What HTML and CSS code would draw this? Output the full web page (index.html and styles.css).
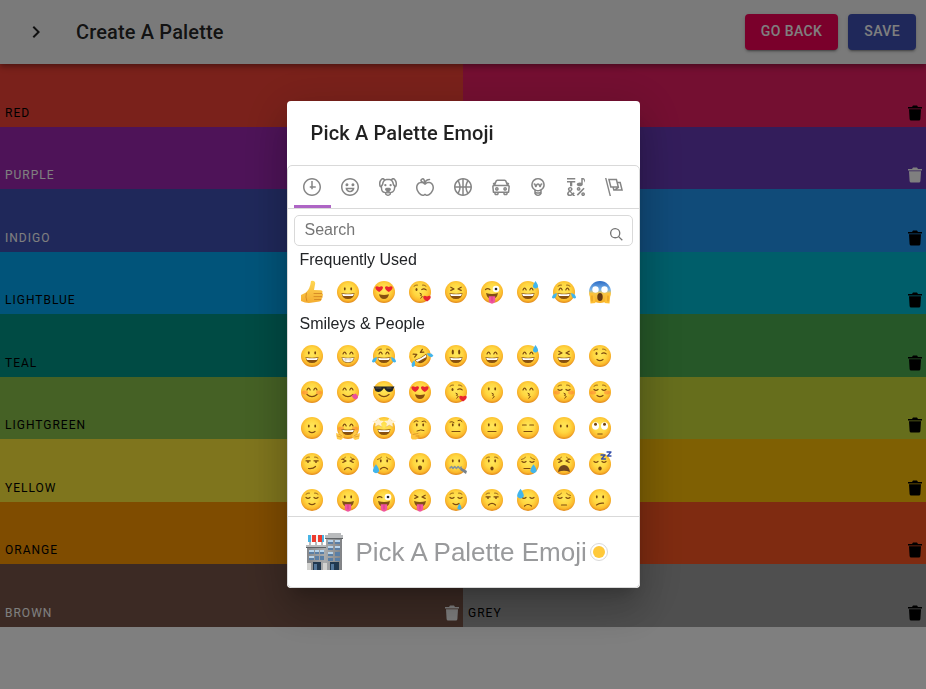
FILE: index.html
```html
<!DOCTYPE html>
<html lang="en">
<head>
<meta charset="utf-8">
<meta name="viewport" content="width=device-width, initial-scale=1">
<title>Create A Palette</title>
<link rel="stylesheet" href="styles.css">
</head>
<body>
<svg class="defs" aria-hidden="true">
  <defs>
    <radialGradient id="skin" cx="50%" cy="42%" r="60%">
      <stop offset="0" stop-color="#ffe75a"/><stop offset=".5" stop-color="#ffd640"/><stop offset=".78" stop-color="#fbb92c"/><stop offset="1" stop-color="#dc7f18"/>
    </radialGradient>
    <linearGradient id="scared" x1="0" y1="0" x2="0" y2="1">
      <stop offset="0" stop-color="#2c6bc4"/><stop offset=".4" stop-color="#78b3ea"/><stop offset=".55" stop-color="#f5c64a"/><stop offset="1" stop-color="#f6ae22"/>
    </linearGradient>
    <linearGradient id="wall" x1="0" y1="0" x2="1" y2="0">
      <stop offset="0" stop-color="#85878a"/><stop offset=".5" stop-color="#a9abad"/><stop offset="1" stop-color="#808285"/>
    </linearGradient>
    <linearGradient id="thumb" x1="0" y1="0" x2="0" y2="1">
      <stop offset="0" stop-color="#ffd652"/><stop offset="1" stop-color="#f4ad32"/>
    </linearGradient>
    <symbol id="trash" viewBox="0 0 14 16"><path d="M0 2h4l1-1.500h4L10 2h4v1.500H0zM1 4.200h12l-.6 9.800q-.1 1.500-1.500 1.500H3.100q-1.400 0-1.500-1.500z"/></symbol>
  </defs>
</svg>

<div class="page">
  <header class="app-bar">
    <button class="icon-button" type="button" aria-label="Open drawer"><svg width="24" height="24" viewBox="0 0 24 24"><path d="M10 6L8.59 7.41 13.17 12l-4.58 4.59L10 18l6-6z"/></svg></button>
    <h1 class="app-title">Create A Palette</h1>
    <div class="app-actions">
      <a class="button button-secondary" href="#">Go Back</a>
      <button class="button button-primary" type="button">Save</button>
    </div>
  </header>
  <main class="palette" id="palette"></main>
</div>

<div class="backdrop">
  <section class="dialog" role="dialog" aria-modal="true" aria-labelledby="dialog-title">
    <h2 class="dialog-title" id="dialog-title">Pick A Palette Emoji</h2>
    <div class="picker">
      <nav class="anchors" id="anchors" aria-label="Emoji categories"></nav>
      <div class="search">
        <input type="search" placeholder="Search" aria-label="Search emoji">
        <button class="search-icon" type="button" aria-label="Search"><svg width="13" height="13" viewBox="0 0 20 20"><path d="M12.9 14.32a8 8 0 1 1 1.41-1.41l5.35 5.33-1.42 1.42-5.33-5.34zM8 14A6 6 0 1 0 8 2a6 6 0 0 0 0 12z"/></svg></button>
      </div>
      <div class="scroll">
        <h3 class="category">Frequently Used</h3>
        <div class="emoji-grid" id="frequent"></div>
        <h3 class="category">Smileys &amp; People</h3>
        <div class="emoji-grid" id="smileys"></div>
      </div>
      <footer class="preview">
        <svg class="preview-emoji" width="38" height="38" viewBox="0 0 38 38" aria-hidden="true">
          <path fill="url(#wall)" d="M1 13h19v24H1zM20 2h16v35H20z"/>
          <path fill="#b9bbbd" d="M0 12h20v2H0zM19 2h18v3H19zM22 0h13v2H22z"/>
          <path fill="#5f6265" d="M0 14h20v1H0zM19 5h18v1H19z"/>
          <path fill="#5b7fa5" d="M3 17h5v4H3zM9 17h4v4H9zM14 17h4v4h-4zM3 23h5v4H3zM9 23h4v4H9zM14 23h4v4h-4zM22 7h5v4h-5zM29 7h5v4h-5zM22 13h5v4h-5zM29 13h5v4h-5zM22 19h5v4h-5zM29 19h5v4h-5zM22 25h5v3h-5zM29 25h5v3h-5z"/>
          <path fill="#b7d3ea" d="M3 17h5v2H3zM9 17h4v2H9zM14 17h4v2h-4zM3 23h5v2H3zM22 7h5v2h-5zM29 7h5v2h-5zM22 13h5v2h-5zM29 13h5v2h-5zM22 19h5v2h-5z"/>
          <path fill="#203850" d="M7 29h8v8H7zM24 29h9v8h-9z"/><path fill="#54779b" d="M8 31h3v6H8zM25 31h3v6h-3z"/>
          <path fill="#d2d2d0" d="M1 30h4v7H1zM17 30h4v7h-4z"/>
          <path fill="#f2f2f2" d="M2 2h16v7H2z"/><path fill="#47b4e5" d="M2 2h3v7H2zM16 2h2v7h-2z"/><path fill="#ed3c2e" d="M6 2h4v7H6zM12 2h4v7h-4z"/>
          <path stroke="#77797b" d="M4 9v3M10 9v3M16 9v3" fill="none"/>
        </svg>
        <span class="preview-label">Pick A Palette Emoji</span>
        <button class="skin" type="button" aria-label="Skin tone"><span class="swatch"></span></button>
      </footer>
    </div>
  </section>
</div>
<script src="script.js"></script>
</body>
</html>
```
FILE: styles.css
```css
*, *::before, *::after { box-sizing: border-box; }
body { margin: 0; font-family: Roboto, "Liberation Sans", sans-serif; color: rgba(0, 0, 0, .87); background: #fff; }
button, input { font: inherit; color: inherit; border: 0; background: none; padding: 0; margin: 0; }
h1, h2, h3 { margin: 0; }
svg { display: block; fill: currentColor; }
.defs { position: absolute; width: 0; height: 0; }

.page { height: 100vh; display: flex; flex-direction: column; }
.app-bar { height: 64px; flex: none; display: flex; align-items: center; padding: 0 10px 0 24px; background: #f5f5f5; position: relative; z-index: 1;
  box-shadow: 0 2px 4px -1px rgba(0,0,0,.2), 0 4px 5px rgba(0,0,0,.14), 0 1px 10px rgba(0,0,0,.12); }
.icon-button { width: 24px; margin-right: 28px; }
.app-title { flex: 1; font-size: 20px; font-weight: 500; line-height: 32px; letter-spacing: .0075em; }
.app-actions { display: flex; gap: 10px; }
.button { height: 36px; padding: 0 16px; border-radius: 4px; font-size: 14px; font-weight: 500; line-height: 35px; letter-spacing: .02857em; text-transform: uppercase; text-decoration: none; color: #fff;
  box-shadow: 0 3px 1px -2px rgba(0,0,0,.2), 0 2px 2px rgba(0,0,0,.14), 0 1px 5px rgba(0,0,0,.12); }
.button-secondary { background: #f50057; }
.button-primary { background: #3f51b5; padding-bottom: 1px; }

.palette { flex: 1; display: grid; grid-template-columns: 1fr 1fr; grid-template-rows: repeat(10, 1fr); }
.color { display: flex; align-items: flex-end; justify-content: space-between; padding: 5px 4px 5px 5px; font-size: 12px; line-height: 18px; letter-spacing: 1px; text-transform: uppercase; color: #000; }
.color-light { color: #fff; }
.trash { width: 14px; height: 18px; }

.backdrop { position: fixed; inset: 0; z-index: 2; display: flex; align-items: center; justify-content: center; background: rgba(0,0,0,.5); }
.dialog { width: 353px; background: #fff; border-radius: 4px;
  box-shadow: 0 11px 15px -7px rgba(0,0,0,.2), 0 24px 38px 3px rgba(0,0,0,.14), 0 9px 46px 8px rgba(0,0,0,.12); }
.dialog-title { padding: 16px 24px; font-size: 20px; font-weight: 500; line-height: 32px; letter-spacing: .0075em; }
.picker { border: 1px solid #d9d9d9; border-radius: 5px; font-family: "Liberation Sans", Arial, sans-serif; font-size: 16px; color: #222427; background: #fff; }
.anchors { display: flex; padding: 0 6px; border-bottom: 1px solid #d9d9d9; }
.anchor { flex: 1; height: 42px; display: flex; justify-content: center; align-items: center; color: #858585; border-bottom: 3px solid transparent; padding-top: 3px; }
.anchor-selected { border-bottom-color: #ae65c5; }
.search { position: relative; margin-top: 6px; padding: 0 6px; }
.search input { display: block; width: 100%; height: 31px; padding: 0 26px 2px 10px; border: 1px solid #d9d9d9; border-radius: 5px; appearance: none; }
.search input::placeholder { color: #757575; opacity: 1; }
.search-icon { position: absolute; right: 16px; top: 13px; color: #757575; }
.scroll { height: 270px; overflow: hidden; padding: 0 6px; }
.category { padding: 4px 6px; font-size: 16px; font-weight: 400; line-height: 20px; }
.emoji-grid { display: grid; grid-template-columns: repeat(9, 36px); }
.emoji { height: 36px; padding: 6px; }
.emoji svg { overflow: visible; }
.preview { height: 71px; display: flex; align-items: center; padding: 0 18px; border-top: 1px solid #d9d9d9; }
.preview-label { margin-left: 12px; font-size: 26px; line-height: 32px; color: #999a9c; }
.skin { width: 18px; height: 18px; margin-left: 3px; padding: 2px; border: 1px solid #d9d9d9; border-radius: 9px; }
.swatch { display: block; width: 12px; height: 12px; border-radius: 6px; background: #ffc93a; }
```
FILE: script.js
```js
const colors = [
  ['red', '#f44336'], ['', '#e91e63'],
  ['purple', '#9c27b0', 1], ['', '#673ab7', 1],
  ['indigo', '#3f51b5', 1], ['', '#2196f3'],
  ['lightblue', '#03a9f4'], ['', '#00bcd4'],
  ['teal', '#009688'], ['', '#4caf50'],
  ['lightgreen', '#8bc34a'], ['', '#cddc39'],
  ['yellow', '#ffeb3b'], ['', '#ffc107'],
  ['orange', '#ff9800'], ['', '#ff5722'],
  ['brown', '#795548', 1], ['grey', '#9e9e9e']
];
document.getElementById('palette').innerHTML = colors.map(([name, hex, light]) =>
  `<div class="color${light ? ' color-light' : ''}" style="background:${hex}"><span>${name}</span>` +
  `<button class="trash" type="button" aria-label="Delete ${name || hex}"><svg width="14" height="16"><use href="#trash"/></svg></button></div>`).join('');

const ring = 'M12 0C5.373 0 0 5.373 0 12s5.373 12 12 12 12-5.373 12-12S18.627 0 12 0m0 22C6.486 22 2 17.514 2 12S6.486 2 12 2s10 4.486 10 10-4.486 10-10 10';
const categories = [
  ['Recent', 'M13 4h-2l-.001 7H9v2h2v2h2v-2h4v-2h-4z' + ring],
  ['Smileys', ring + 'M8 7a2 2 0 1 0-.001 3.999A2 2 0 0 0 8 7M16 7a2 2 0 1 0-.001 3.999A2 2 0 0 0 16 7M15.232 15c-.693 1.195-1.87 2-3.349 2-1.477 0-2.655-.805-3.347-2H15m3-2H6a6 6 0 1 0 12 0'],
  ['Animals', 'M15.5 8a1.5 1.5 0 1 0 .001 3.001A1.5 1.5 0 0 0 15.5 8M8.5 8a1.5 1.5 0 1 0 .001 3.001A1.5 1.5 0 0 0 8.5 8M18.933 0h-.027c-.97 0-2.138.787-3.018 1.497-1.274-.374-2.612-.51-3.887-.51-1.285 0-2.616.133-3.874.517C7.245.79 6.069 0 5.093 0h-.027C3.352 0 .07 2.67.002 7.026c-.039 2.479.276 4.238 1.04 5.013.254.258.882.677 1.295.882.191 3.177.922 5.238 2.536 6.38.897.637 2.187.949 3.2 1.102C8.04 20.6 8 20.795 8 21c0 1.773 2.35 3 4 3 1.648 0 4-1.227 4-3 0-.201-.038-.393-.072-.586 2.573-.385 5.435-1.877 5.925-7.587.396-.22.887-.568 1.104-.788.763-.774 1.079-2.534 1.04-5.013C23.929 2.67 20.646 0 18.933 0M3.223 9.135c-.237.281-.837 1.155-.884 1.238-.15-.41-.368-1.349-.337-3.291.051-3.281 2.478-4.972 3.091-5.031.256.015.731.27 1.265.646-1.11 1.171-2.275 2.915-2.352 5.125-.133.546-.398.858-.783 1.313M12 22c-.901 0-1.954-.693-2-1 0-.654.475-1.236 1-1.602V20a1 1 0 1 0 2 0v-.602c.524.365 1 .947 1 1.602-.046.307-1.099 1-2 1m3-3.48v.02a4.752 4.752 0 0 0-1.262-1.02c1.092-.516 2.239-1.334 2.239-2.217 0-1.842-1.781-2.195-3.977-2.195-2.196 0-3.978.354-3.978 2.195 0 .883 1.148 1.701 2.238 2.217A4.8 4.8 0 0 0 9 18.539v-.025c-1-.076-2.182-.281-2.973-.842-1.301-.92-1.838-3.045-1.853-6.478l.023-.041c.496-.826 1.49-1.45 1.804-3.102 0-2.047 1.357-3.631 2.362-4.522C9.37 3.178 10.555 3 11.948 3c1.447 0 2.685.192 3.733.57 1 .9 2.316 2.465 2.316 4.48.313 1.651 1.307 2.275 1.803 3.102.035.058.068.117.102.178-.059 5.967-1.949 7.01-4.902 7.19m6.628-8.202c-.037-.065-.074-.13-.113-.195a7.587 7.587 0 0 0-.739-.987c-.385-.455-.648-.768-.782-1.313-.076-2.209-1.241-3.954-2.353-5.124.531-.376 1.004-.63 1.261-.647.636.071 3.044 1.764 3.096 5.031.027 1.81-.347 3.218-.37 3.235'],
  ['Food', 'M17 4.978c-1.838 0-2.876.396-3.68.934.513-1.172 1.768-2.934 4.68-2.934a1 1 0 0 0 0-2c-2.921 0-4.629 1.365-5.547 2.512-.064.078-.119.162-.18.244C11.73 1.838 10.798.023 9.207.023 8.579.022 7.85.306 7 .978 5.027 2.54 5.329 3.902 6.492 4.999 3.609 5.222 0 7.352 0 12.969c0 4.582 4.961 11.009 9 11.009 1.975 0 2.371-.486 3-1 .629.514 1.025 1 3 1 4.039 0 9-6.418 9-11 0-5.953-4.055-8-7-8M8.242 2.546c.641-.508.943-.523.965-.523.426.169.975 1.405 1.357 3.055-1.527-.629-2.741-1.352-2.98-1.846.059-.112.241-.356.658-.686M15 21.978c-1.08 0-1.21-.109-1.559-.402l-.176-.146c-.367-.302-.816-.452-1.266-.452s-.898.15-1.266.452l-.176.146c-.347.292-.477.402-1.557.402-2.813 0-7-5.389-7-9.009 0-5.823 4.488-5.991 5-5.991 1.939 0 2.484.471 3.387 1.251l.323.276a1.995 1.995 0 0 0 2.58 0l.323-.276c.902-.78 1.447-1.251 3.387-1.251.512 0 5 .168 5 6 0 3.617-4.187 9-7 9'],
  ['Activity', 'M12 0C5.373 0 0 5.372 0 12c0 6.627 5.373 12 12 12 6.628 0 12-5.373 12-12 0-6.628-5.372-12-12-12m9.949 11H17.05c.224-2.527 1.232-4.773 1.968-6.113A9.966 9.966 0 0 1 21.949 11M13 11V2.051a9.945 9.945 0 0 1 4.432 1.564c-.858 1.491-2.156 4.22-2.392 7.385H13zm-2 0H8.961c-.238-3.165-1.536-5.894-2.393-7.385A9.95 9.95 0 0 1 11 2.051V11zm0 2v8.949a9.937 9.937 0 0 1-4.432-1.564c.857-1.492 2.155-4.221 2.393-7.385H11zm4.04 0c.236 3.164 1.534 5.893 2.392 7.385A9.92 9.92 0 0 1 13 21.949V13h2.04zM4.982 4.887C5.718 6.227 6.726 8.473 6.951 11h-4.9a9.977 9.977 0 0 1 2.931-6.113M2.051 13h4.9c-.226 2.527-1.233 4.771-1.969 6.113A9.972 9.972 0 0 1 2.051 13m16.967 6.113c-.735-1.342-1.744-3.586-1.968-6.113h4.899a9.961 9.961 0 0 1-2.931 6.113'],
  ['Travel', 'M6.5 12C5.122 12 4 13.121 4 14.5S5.122 17 6.5 17 9 15.879 9 14.5 7.878 12 6.5 12m0 3c-.275 0-.5-.225-.5-.5s.225-.5.5-.5.5.225.5.5-.225.5-.5.5M17.5 12c-1.378 0-2.5 1.121-2.5 2.5s1.122 2.5 2.5 2.5 2.5-1.121 2.5-2.5-1.122-2.5-2.5-2.5m0 3c-.275 0-.5-.225-.5-.5s.225-.5.5-.5.5.225.5.5-.225.5-.5.5M22.482 9.494l-1.039-.346L21.4 9h.6c.552 0 1-.439 1-.992 0-.006-.003-.008-.003-.008H23c0-1-.889-2-1.984-2h-.642l-.731-1.717C19.262 3.012 18.091 2 16.764 2H7.236C5.909 2 4.738 3.012 4.357 4.283L3.626 6h-.642C1.889 6 1 7 1 8h.003S1 8.002 1 8.008C1 8.561 1.448 9 2 9h.6l-.043.148-1.039.346a2.001 2.001 0 0 0-1.359 2.097l.751 7.508a1 1 0 0 0 .994.901H3v1c0 1.103.896 2 2 2h2c1.104 0 2-.897 2-2v-1h6v1c0 1.103.896 2 2 2h2c1.104 0 2-.897 2-2v-1h1.096a.999.999 0 0 0 .994-.901l.751-7.508a2.001 2.001 0 0 0-1.359-2.097M6.273 4.857C6.402 4.43 6.788 4 7.236 4h9.527c.448 0 .834.43.963.857L19.313 9H4.688l1.585-4.143zM7 21H5v-1h2v1zm12 0h-2v-1h2v1zm2.189-3H2.811l-.662-6.607L3 11h18l.852.393L21.189 18z'],
  ['Objects', 'M12 0a9 9 0 0 0-5 16.482V21s2.035 3 5 3 5-3 5-3v-4.518A9 9 0 0 0 12 0zm0 2c3.86 0 7 3.141 7 7s-3.14 7-7 7-7-3.141-7-7 3.14-7 7-7zM9 17.477c.94.332 1.946.523 3 .523s2.06-.19 3-.523v.834c-.91.436-1.925.689-3 .689a6.924 6.924 0 0 1-3-.69v-.833zm.236 3.07A8.854 8.854 0 0 0 12 21c.965 0 1.888-.167 2.758-.451C14.155 21.173 13.153 22 12 22c-1.102 0-2.117-.789-2.764-1.453zM14.745 12.449h-.004c-.852-.024-1.188-.858-1.577-1.824-.421-1.061-.703-1.561-1.182-1.566h-.009c-.481 0-.783.497-1.235 1.537-.436.982-.801 1.811-1.636 1.791l-.276-.043c-.565-.171-.853-.691-1.284-1.794-.125-.313-.202-.632-.27-.913-.051-.213-.127-.53-.195-.634C7.067 9.004 7.039 9 6.99 9A1 1 0 0 1 7 7h.01c1.662.017 2.015 1.373 2.198 2.134.486-.981 1.304-2.058 2.797-2.075 1.531.018 2.28 1.153 2.731 2.141l.002-.008C14.944 8.424 15.327 7 16.979 7h.032A1 1 0 1 1 17 9h-.011c-.149.076-.256.474-.319.709a6.484 6.484 0 0 1-.311.951c-.429.973-.79 1.789-1.614 1.789'],
  ['Symbols', 'M0 0h11v2H0zM4 11h3V6h4V4H0v2h4zM15.5 17c1.381 0 2.5-1.116 2.5-2.493s-1.119-2.493-2.5-2.493S13 13.13 13 14.507 14.119 17 15.5 17m0-2.986c.276 0 .5.222.5.493 0 .272-.224.493-.5.493s-.5-.221-.5-.493.224-.493.5-.493M21.5 19.014c-1.381 0-2.5 1.116-2.5 2.493S20.119 24 21.5 24s2.5-1.116 2.5-2.493-1.119-2.493-2.5-2.493m0 2.986a.497.497 0 0 1-.5-.493c0-.271.224-.493.5-.493s.5.222.5.493a.497.497 0 0 1-.5.493M22 13l-9 9 1.513 1.5 8.99-9.009zM17 11c2.209 0 4-1.119 4-2.5V2s.985-.161 1.498.949C23.01 4.055 23 6 23 6s1-1.119 1-3.135C24-.02 21 0 21 0h-2v6.347A5.853 5.853 0 0 0 17 6c-2.209 0-4 1.119-4 2.5s1.791 2.5 4 2.5M10.297 20.482l-1.475-1.585a47.54 47.54 0 0 1-1.442 1.129c-.307-.288-.989-1.016-2.045-2.183.902-.836 1.479-1.466 1.729-1.892s.376-.871.376-1.336c0-.592-.273-1.178-.818-1.759-.546-.581-1.329-.871-2.349-.871-1.008 0-1.79.293-2.344.879-.556.587-.832 1.181-.832 1.784 0 .813.419 1.748 1.256 2.805-.847.614-1.444 1.208-1.794 1.784a3.465 3.465 0 0 0-.523 1.833c0 .857.308 1.56.924 2.107.616.549 1.423.823 2.42.823 1.173 0 2.444-.379 3.813-1.137L8.235 24h2.819l-2.09-2.383 1.333-1.135zm-6.736-6.389a1.02 1.02 0 0 1 .73-.286c.31 0 .559.085.747.254a.849.849 0 0 1 .283.659c0 .518-.419 1.112-1.257 1.784-.536-.651-.805-1.231-.805-1.742a.901.901 0 0 1 .302-.669M3.74 22c-.427 0-.778-.116-1.057-.349-.279-.232-.418-.487-.418-.766 0-.594.509-1.288 1.527-2.083.968 1.134 1.717 1.946 2.248 2.438-.921.507-1.686.76-2.3.76'],
  ['Flags', 'M0 0l6.084 24H8L1.916 0zM21 5h-4l-1-4H4l3 12h3l1 4h13L21 5zM6.563 3h7.875l2 8H8.563l-2-8zm8.832 10l-2.856 1.904L12.063 13h3.332zM19 13l-1.5-6h1.938l2 8H16l3-2z']
];
document.getElementById('anchors').innerHTML = categories.map(([name, d], i) =>
  `<button class="anchor${i ? '' : ' anchor-selected'}" type="button" aria-label="${name}"><svg width="18" height="18" viewBox="0 0 24 24"><path d="${d}"/></svg></button>`).join('');

const line = (d, w = 1.2, c = '#7d4a10') => `<path d="${d}" fill="none" stroke="${c}" stroke-width="${w}" stroke-linecap="round" stroke-linejoin="round"/>`;
const fill = (d, c) => `<path d="${d}" fill="${c}"/>`;
const oval = (x, y, rx, ry, c = '#74440f') => `<ellipse cx="${x}" cy="${y}" rx="${rx}" ry="${ry}" fill="${c}"/>`;
const heart = (x, y) => fill(`M${x} ${y + 3.5}C${x - 6} ${y} ${x - 4} ${y - 4} ${x} ${y - 1.5}C${x + 4} ${y - 4} ${x + 6} ${y} ${x} ${y + 3.5}z`, '#e8252f');
const drop = (x, y, s = 1) => fill(`M${x} ${y - 4 * s}q${3 * s} ${4 * s} ${2.5 * s} ${6 * s}q-${2.5 * s} ${3 * s}-${5 * s} 0q-${0.5 * s}-${2 * s} ${2.5 * s}-${6 * s}z`, '#42b5ec');
const part = {
  dots: oval(8.8, 8.8, .9, 1.6) + oval(15.2, 8.8, .9, 1.6),
  low: oval(8.8, 10, .9, 1.5) + oval(15.2, 10, .9, 1.5),
  happy: line('M7 10q1.600-3.600 3.200 0M13.800 10q1.600-3.600 3.200 0'),
  squint: line('M6.800 7.200l3.200 1.800-3.200 1.400M17.200 7.200l-3.200 1.800 3.200 1.400'),
  shut: line('M6 9.500q2 1.800 4 0M14 9.500q2 1.800 4 0'),
  flat: line('M6.500 9h3.700M13.800 9h3.700'),
  side: line('M6 8.800h4.200M14 8.800h4.200') + oval(8, 10, .9, 1.100) + oval(16, 10, .9, 1.100),
  brows: line('M6 6.200q2-1.800 3.500-1.200M18 6.200q-2-1.800-3.500-1.200', .8),
  sadbrows: line('M5.500 7.500q2.500-.5 4-2.200M18.500 7.500q-2.500-.5-4-2.200', .8),
  wink: oval(8.500, 9.500, 1, 1.500) + line('M13.800 9.500q2.200-1.300 4.400.4'),
  wild: line('M5.500 9.500q2.200-1.800 4.400 0') + oval(16, 9, 3.300, 3.300, '#fff') + oval(16, 9, 1.300, 1.300, '#20262e'),
  hearts: heart(7.200, 8.500) + heart(16.800, 8.500),
  blush: '<g opacity=".4">' + oval(5, 12.500, 3, 2, '#ff6734') + oval(19, 12.500, 3, 2, '#ff6734') + '</g>',
  grin: fill('M5.500 13q6.500 1.600 13 0-.6 6-6.500 6t-6.500-6z', '#87500f') + fill('M6.200 13.700q5.800 1.200 11.600 0-.3 2.300-1.200 2.300H7.400q-.9 0-1.200-2.300z', '#fff'),
  teeth: fill('M5.500 13q6.500 1.600 13 0-.6 6-6.500 6t-6.500-6z', '#9a6c28') + fill('M6.200 13.700q5.800 1.200 11.600 0-.8 4.500-5.800 4.500t-5.800-4.500z', '#fff') + line('M7 15.800h10M9.800 14v4M14.200 14v4', .4, '#b9ab98'),
  smile: line('M7 14.500q5 4.200 10 0'),
  small: line('M9 15.500q3 2.200 6 0'),
  straight: line('M8 15.500h8'),
  frown: line('M8.500 17q3.500-3.300 7 0'),
  oh: oval(12, 15.800, 2, 2.400),
  kiss: line('M12 13.200q3 .5.500 2.200q3.500 1 .2 2.800', 1),
  tongue: fill('M6 13q6 2.200 12 0-1 6-6 6T6 13z', '#805014') + fill('M8.800 16.300h6.400v4.700q-.8 2.700-3.200 2.700T8.800 21z', '#f0559d') + line('M12 17v4', .6, '#c92e78'),
  sweat: drop(19.500, 5),
  tears: fill('M0 18q0-4 5-5-.8 7-5 5zM24 18q0-4-5-5 .8 7 5 5z', '#42b5ec')
};
const face = (...names) => '<circle cx="12" cy="12" r="11" fill="url(#skin)"/>' + names.map(n => part[n] || n).join('');

const emoji = {
  thumb: fill('M1 15l5-2.500q4-3.500 5-11.500 4-1 4.200 2.500L14 10l7 .2q2.500.8 1 3 2 1.300.2 3.100 1 1.700-.8 2.700.2 2-2 2.500l-8.400 1.300Q6 23.500 1 21z', 'url(#thumb)') + line('M14 13.500h7.800M14 16.600h8M14.500 19.500h6.500M6.300 13q-1 4 .5 8', .8, '#cf8120'),
  grinning: face('dots', 'grin'),
  beaming: face('happy', 'teeth'),
  joy: face('happy', 'brows', 'grin', 'tears'),
  rofl: '<g transform="rotate(-28 12 12)">' + face('squint', 'grin', 'tears') + '</g>',
  smiley: face(oval(8.800, 8, 1.100, 2.500) + oval(15.200, 8, 1.100, 2.500), 'grin'),
  smile: face('happy', 'grin'),
  sweat: face('happy', 'grin', 'sweat'),
  laughing: face('squint', 'grin'),
  wink: face('wink', 'brows', 'small'),
  blush: face('blush', 'happy', 'smile'),
  yum: face('happy', 'smile', fill('M15.500 15.500l4-2q4 3 1.500 5.500-3 1.500-5.500-3.500z', '#ed4f9a')),
  cool: face(fill('M1.500 6.500h21l-1 2-1 2.500q-4.500 2.500-7-1L12.500 8.500h-1l-1 1.500q-3 3.500-7 1L2.500 8.500z', '#202326'), line('M4 8h5M15 8h4', .6, '#777'), 'smile'),
  hearts: face('hearts', fill('M7 14.300q5 1.200 10 0-.8 4.700-5 4.700t-5-4.700z', '#87500f')),
  kissing: face('wink', 'brows', 'kiss', heart(19, 18)),
  kiss: face('dots', 'kiss'),
  kissSmile: face('happy', 'kiss'),
  kissShut: face('blush', 'shut', 'brows', 'kiss'),
  relaxed: face('blush', 'shut', 'brows', 'small'),
  slight: face('low', 'small'),
  hug: face('blush', 'happy', 'grin', fill('M0 17l3 1 1-3 2 1 2 5-3 3-4-1zM24 17l-3 1-1-3-2 1-2 5 3 3 4-1z', '#ffcb4a'), line('M1 20l4 1M3 18l3 2M23 20l-4 1M21 18l-3 2', .6, '#d38920')),
  star: face('grin', fill('M6.500 1.500l1.600 3.100 4 .4-3 2.500.8 3.500-3.400-1.800-3.500 1.800.7-3.500L0 5l4.500-.4zM17.500 1.500l-1.600 3.100-4 .4 3 2.500-.8 3.500 3.400-1.800 3.500 1.800-.7-3.500L24 5l-4.500-.4z', '#fff1cf'), line('M2.500 11l4-1.800 3.400 1.800M14 11l3.500-1.800 3.500 1.800', .5, '#d9a04a')),
  think: face('dots', line('M6 6q2-2.500 4-.8M14 5.500q2.500-1.500 4 .5M9 15q4-2 7-.5', 1), fill('M4 15q2 0 2 3l6-2q2 .5-.5 2.200l-2 1.200q1 3-1.500 4-6 1-5-4z', '#ffc43e'), line('M5 18.500l5-1M8 20h3', .6, '#c77c1a')),
  raised: face('dots', line('M6 6q2-1 4 .5M14 4.500q2.500-1.500 4 1', 1), 'straight'),
  neutral: face('dots', 'straight'),
  blank: face('flat', 'straight'),
  silent: face('low'),
  eyeroll: face(oval(7.500, 10, 3.500, 3.700, '#fff') + oval(16.500, 10, 3.500, 3.700, '#fff') + oval(7.500, 8.200, 1.500, 1.500) + oval(16.500, 8.200, 1.500, 1.500), line('M9.800 18h4.400', 1)),
  smirk: face('side', 'brows', line('M8.500 16.500q4.500.5 7-2')),
  persevere: face('squint', 'sadbrows', line('M8.500 17.500q3.500-4 7 0')),
  cry: face('dots', 'sadbrows', 'frown', drop(4, 17, 1.200)),
  open: face('dots', 'oh'),
  zip: face('dots', line('M6 16l1.500-1.500L9 16.500l1.700-2 1.700 2 1.700-2 1.700 2 1.400-1.500', 1.500, '#85929a'), fill('M17 15.500l6 3.500-1 3-6-4z', '#78828a')),
  hushed: face('dots', 'brows', oval(12, 16.500, 1.600, 1.900)),
  sleepy: face('shut', 'sadbrows', line('M8 16.500h6'), drop(17.500, 17, 1.200)),
  tired: face('squint', 'sadbrows', fill('M6 20q1-7 6-7t6 7q-6-2.500-12 0z', '#70451e')),
  sleeping: face('shut', oval(12, 16.500, 1.700, 1.900), line('M13 3h4l-3.500 4h4M19 0h4l-3.500 4H23', 1.300, '#354faa')),
  relieved: face('shut', 'brows', 'small'),
  tongue: face('dots', 'tongue'),
  wild: face('wild', 'tongue'),
  tongueSquint: face('squint', 'tongue'),
  drool: face('shut', 'brows', 'small', drop(15.500, 19, .8)),
  unamused: face('side', 'brows', 'frown'),
  coldSweat: face('shut', line('M8.500 18q3.500-3 7 0'), drop(4.500, 6, 1.300)),
  pensive: face('shut', 'sadbrows', line('M9.500 17h5')),
  confused: face('dots', line('M8.500 17q3-2.300 7-1.800')),
  scream: '<circle cx="12" cy="12" r="11" fill="url(#scared)"/>' + oval(7.500, 9.500, 3.200, 3.200, '#fff') + oval(16.500, 9.500, 3.200, 3.200, '#fff') + oval(12, 17, 2.700, 4, '#643814') + fill('M1.500 13l3 0 2 4 1 6-5 .5zM22.500 13l-3 0-2 4-1 6 5 .5z', '#ffc034') + line('M4 16v5M20 16v5', .6, '#c37a19')
};
const draw = (id, names) => {
  document.getElementById(id).innerHTML = names.split(' ').map(n =>
    `<button class="emoji" type="button" aria-label="${n}"><svg width="24" height="24" viewBox="0 0 24 24">${emoji[n]}</svg></button>`).join('');
};
draw('frequent', 'thumb grinning hearts kissing laughing wild sweat joy scream');
draw('smileys', 'grinning beaming joy rofl smiley smile sweat laughing wink ' +
  'blush yum cool hearts kissing kiss kissSmile kissShut relaxed ' +
  'slight hug star think raised neutral blank silent eyeroll ' +
  'smirk persevere cry open zip hushed sleepy tired sleeping ' +
  'relieved tongue wild tongueSquint drool unamused coldSweat pensive confused');
```
